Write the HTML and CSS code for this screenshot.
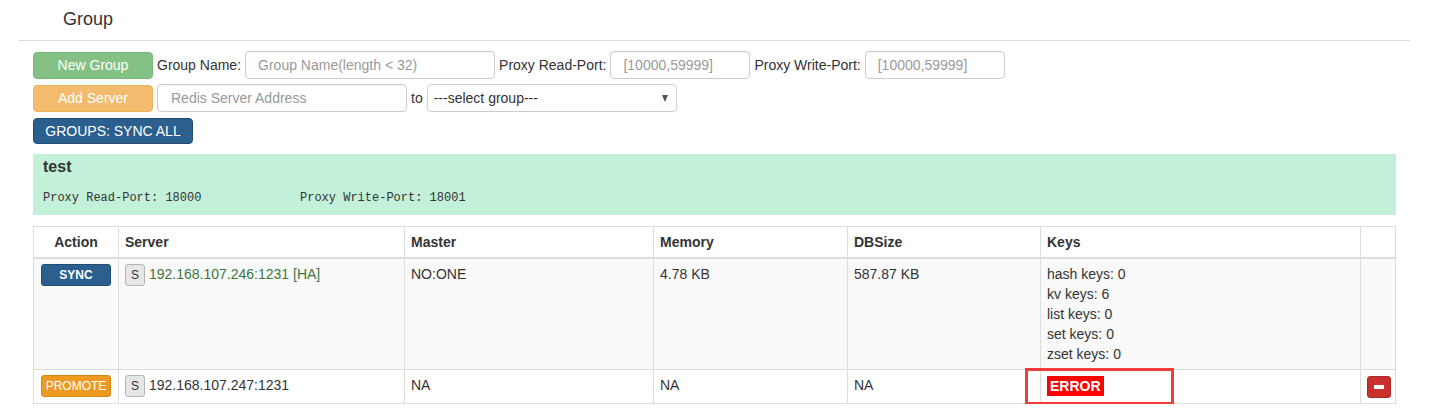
FILE: index.html
```html
<!DOCTYPE html>
<html>
<head>
<meta charset="utf-8">
<title>Group</title>
<link rel="stylesheet" href="styles.css">
</head>
<body>
<div class="page">
  <div class="title">Group</div>
  <div class="content">
    <div class="form-row">
      <button class="btn btn-new">New Group</button>
      <label class="lbl">Group Name:</label>
      <input class="inp w250" type="text" placeholder="Group Name(length &lt; 32)">
      <label class="lbl">Proxy Read-Port:</label>
      <input class="inp w140" type="text" placeholder="[10000,59999]">
      <label class="lbl">Proxy Write-Port:</label>
      <input class="inp w140" type="text" placeholder="[10000,59999]">
    </div>
    <div class="form-row">
      <button class="btn btn-add">Add Server</button>
      <input class="inp w250 inp-redis" type="text" placeholder="Redis Server Address">
      <label class="lbl">to</label>
      <div class="select-wrap">
        <select class="sel"><option>---select group---</option></select>
      </div>
    </div>
    <div class="form-row">
      <button class="btn btn-sync-all">GROUPS: SYNC ALL</button>
    </div>

    <div class="panel">
      <h4 class="panel-title">test</h4>
      <p class="panel-ports"><span class="port">Proxy Read-Port: 18000</span><span class="port">Proxy Write-Port: 18001</span></p>
    </div>

    <table class="grid">
      <colgroup>
        <col class="c-action"><col class="c-server"><col class="c-master"><col class="c-mem"><col class="c-db"><col class="c-keys"><col class="c-op">
      </colgroup>
      <thead>
        <tr>
          <th class="center">Action</th>
          <th>Server</th>
          <th>Master</th>
          <th>Memory</th>
          <th>DBSize</th>
          <th>Keys</th>
          <th></th>
        </tr>
      </thead>
      <tbody>
        <tr class="striped">
          <td class="center"><button class="btn-xs btn-sync">SYNC</button></td>
          <td><span class="srv"><span class="badge-s">S</span><span class="srv-ha">192.168.107.246:1231 [HA]</span></span></td>
          <td>NO:ONE</td>
          <td>4.78 KB</td>
          <td>587.87 KB</td>
          <td>hash keys: 0<br>kv keys: 6<br>list keys: 0<br>set keys: 0<br>zset keys: 0</td>
          <td></td>
        </tr>
        <tr>
          <td class="center"><button class="btn-xs btn-promote">PROMOTE</button></td>
          <td><span class="srv"><span class="badge-s">S</span><span>192.168.107.247:1231</span></span></td>
          <td>NA</td>
          <td>NA</td>
          <td>NA</td>
          <td class="keys-err"><span class="err">ERROR</span><span class="highlight"></span></td>
          <td><button class="btn-del"><span class="minus"></span></button></td>
        </tr>
      </tbody>
    </table>
  </div>
</div>
</body>
</html>
```

FILE: styles.css
```css
* { box-sizing: border-box; }

body {
  margin: 0;
  font-family: "Liberation Sans", Arial, Helvetica, sans-serif;
  font-size: 14px;
  line-height: 20px;
  color: #333;
  background: #fff;
}

.page {
  margin: 0 29px 0 18px;
}

.title {
  height: 41px;
  padding-left: 45px;
  padding-top: 7px;
  font-size: 18px;
  line-height: 24px;
  color: #333;
  border-bottom: 1px solid #ddd;
}

.content {
  padding: 10px 14px 0 15px;
}

.form-row {
  display: flex;
  align-items: center;
  height: 28px;
  margin-bottom: 5px;
}

.btn {
  height: 27px;
  border: 1px solid transparent;
  border-radius: 4px;
  color: #fff;
  font-family: inherit;
  font-size: 14px;
  padding: 0;
  white-space: nowrap;
  cursor: pointer;
}

.btn-new {
  width: 120px;
  background: #85c185;
  border-color: #7ab87a;
}

.btn-add {
  width: 120px;
  background: #f2bb6d;
  border-color: #edb35f;
}

.btn-sync-all {
  width: 160px;
  height: 26px;
  background: #2b5f8e;
  border-color: #214d74;
}

.lbl {
  margin: 0 4px 0 4px;
  white-space: nowrap;
}

.inp {
  height: 28px;
  border: 1px solid #ccc;
  border-radius: 4px;
  padding: 0 12px;
  font-family: inherit;
  font-size: 14px;
  color: #555;
  box-shadow: inset 0 1px 1px rgba(0,0,0,.04);
}

.inp::placeholder { color: #999; }

.inp-redis { margin-left: 4px; padding-left: 13px; }

.w250 { width: 250px; }
.w140 { width: 140px; }

.select-wrap {
  position: relative;
  width: 250px;
  height: 28px;
}

.select-wrap::after {
  content: "";
  position: absolute;
  right: 9px;
  top: 11px;
  border-left: 3.5px solid transparent;
  border-right: 3.5px solid transparent;
  border-top: 7px solid #555;
}

.sel {
  -webkit-appearance: none;
  appearance: none;
  width: 100%;
  height: 28px;
  border: 1px solid #ccc;
  border-radius: 4px;
  padding: 0 6px;
  background: #fff;
  font-family: inherit;
  font-size: 14px;
  color: #333;
}

.panel {
  margin-top: 9px;
  background: #c2f0d9;
  height: 61px;
  padding: 3px 10px 0;
}

.panel-title {
  margin: 0;
  font-size: 16px;
  font-weight: bold;
  line-height: 20px;
  color: #333;
}

.panel-ports {
  margin: 13px 0 0;
  font-family: "Liberation Mono", "DejaVu Sans Mono", monospace;
  font-size: 12px;
  line-height: 16px;
  color: #333;
}

.port {
  display: inline-block;
  width: 257px;
}

.grid {
  margin-top: 11px;
  width: 1362px;
  table-layout: fixed;
  border-collapse: collapse;
  border: 1px solid #ddd;
}

.c-action { width: 85px; }
.c-server { width: 286px; }
.c-master { width: 249px; }
.c-mem { width: 194px; }
.c-db { width: 193px; }
.c-keys { width: 320px; }
.c-op { width: 35px; }

.grid th,
.grid td {
  border: 1px solid #ddd;
  padding: 5px 5px 5px 6px;
  text-align: left;
  vertical-align: top;
  line-height: 20px;
}

.grid th {
  font-weight: bold;
  border-bottom: 2px solid #ddd;
  padding-top: 5px;
}

.grid .center { text-align: center; padding-left: 5px; }

.striped td { background: #f9f9f9; }

.btn-xs {
  width: 70px;
  height: 22px;
  border: 1px solid transparent;
  border-radius: 3px;
  color: #fff;
  font-family: inherit;
  font-size: 12px;
  line-height: 16px;
  padding: 0;
  vertical-align: top;
}

.btn-sync {
  background: #2b5f8e;
  border-color: #204d74;
  font-weight: bold;
}

.btn-promote {
  background: #ee9a22;
  border-color: #d98914;
}

.srv {
  display: flex;
  align-items: flex-start;
}

.badge-s {
  display: inline-block;
  width: 20px;
  height: 22px;
  margin-right: 4px;
  border: 1px solid #b5b5b5;
  border-radius: 3px;
  background: #e6e6e6;
  font-size: 12px;
  line-height: 20px;
  text-align: center;
  color: #333;
  flex: none;
}

.srv-ha { color: #3c763d; }

.keys-err { position: relative; }

.err {
  display: inline-block;
  background: #ff0000;
  color: #fff;
  font-weight: bold;
  padding: 0 3px;
  line-height: 20px;
  margin-top: 1px;
}

.highlight {
  position: absolute;
  left: -16px;
  top: -2px;
  width: 149px;
  height: 37px;
  border: 3px solid #f23b3b;
  pointer-events: none;
}

.btn-del {
  position: relative;
  width: 24px;
  height: 22px;
  margin-top: 1px;
  border: 1px solid #ac2925;
  border-radius: 3px;
  background: #c9302c;
  padding: 0;
  display: flex;
  align-items: center;
  justify-content: center;
}

.minus {
  display: block;
  width: 10px;
  height: 4px;
  background: #fff;
}
```
